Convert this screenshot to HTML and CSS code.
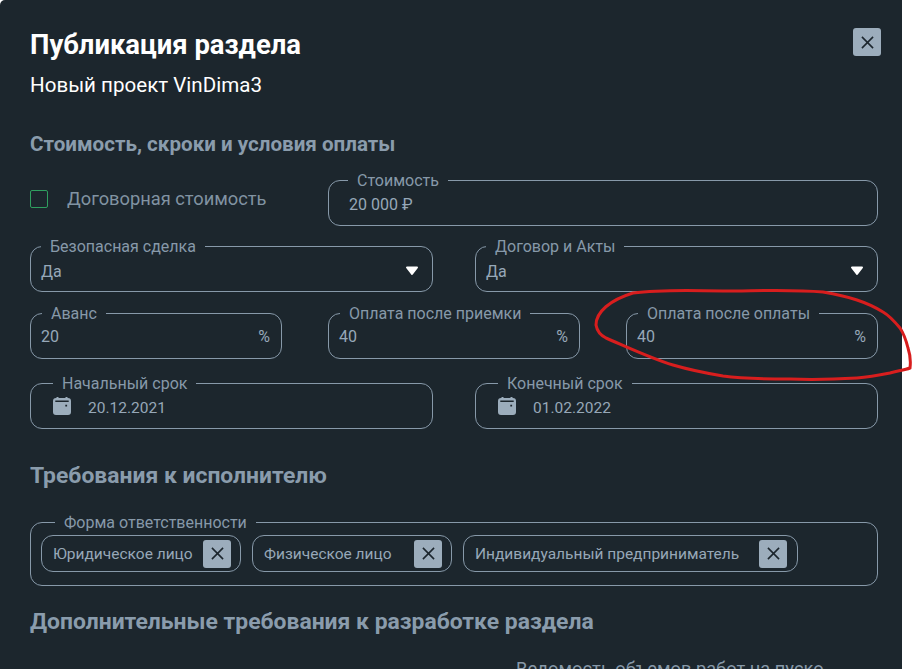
FILE: index.html
```html
<!DOCTYPE html>
<html lang="ru">
<head>
<meta charset="utf-8">
<title>Публикация раздела</title>
<link rel="stylesheet" href="styles.css">
</head>
<body>
<main class="modal">
  <header class="modal-head">
    <div>
      <h1 class="title">Публикация раздела</h1>
      <p class="subtitle">Новый проект VinDima3</p>
    </div>
    <button class="x-btn" type="button" aria-label="Закрыть"><svg viewBox="0 0 14 14"><path d="M1 1l12 12M13 1L1 13"/></svg></button>
  </header>

  <h2 class="section s-pay">Стоимость, скроки и условия оплаты</h2>
  <div class="row r-cost">
    <label class="check"><span class="box"></span><span class="check-text">Договорная стоимость</span></label>
    <fieldset class="field cost"><legend>Стоимость</legend><span class="val">20 000 ₽</span></fieldset>
  </div>
  <div class="row two g-a">
    <fieldset class="field"><legend>Безопасная сделка</legend><span class="val">Да</span><svg class="caret" viewBox="0 0 14 10"><path d="M2 1.5h10L7 8z"/></svg></fieldset>
    <fieldset class="field"><legend>Договор и Акты</legend><span class="val">Да</span><svg class="caret" viewBox="0 0 14 10"><path d="M2 1.5h10L7 8z"/></svg></fieldset>
  </div>
  <div class="row three">
    <fieldset class="field"><legend>Аванс</legend><span class="val">20</span><span class="unit">%</span></fieldset>
    <fieldset class="field"><legend>Оплата после приемки</legend><span class="val">40</span><span class="unit">%</span></fieldset>
    <fieldset class="field"><legend>Оплата после оплаты</legend><span class="val">40</span><span class="unit">%</span></fieldset>
  </div>
  <div class="row two g-c">
    <fieldset class="field date"><legend>Начальный срок</legend><svg class="cal" viewBox="0 0 18 18"><path d="M3.5 0h2v1h7V0h2v1h.5A3 3 0 0 1 18 4v11a3 3 0 0 1-3 3H3a3 3 0 0 1-3-3V4a3 3 0 0 1 3-3h.5z"/><path class="cal-cut" d="M2.3 4.2h13.4M12.3 8.6h1.8"/></svg><span class="val">20.12.2021</span></fieldset>
    <fieldset class="field date"><legend>Конечный срок</legend><svg class="cal" viewBox="0 0 18 18"><path d="M3.5 0h2v1h7V0h2v1h.5A3 3 0 0 1 18 4v11a3 3 0 0 1-3 3H3a3 3 0 0 1-3-3V4a3 3 0 0 1 3-3h.5z"/><path class="cal-cut" d="M2.3 4.2h13.4M12.3 8.6h1.8"/></svg><span class="val">01.02.2022</span></fieldset>
  </div>

  <h2 class="section big s-req">Требования к исполнителю</h2>
  <fieldset class="field chips"><legend>Форма ответственности</legend>
    <span class="chip c1">Юридическое лицо<button class="x-btn" type="button" aria-label="Удалить"><svg viewBox="0 0 14 14"><path d="M1 1l12 12M13 1L1 13"/></svg></button></span>
    <span class="chip c2">Физическое лицо<button class="x-btn" type="button" aria-label="Удалить"><svg viewBox="0 0 14 14"><path d="M1 1l12 12M13 1L1 13"/></svg></button></span>
    <span class="chip c3">Индивидуальный предприниматель<button class="x-btn" type="button" aria-label="Удалить"><svg viewBox="0 0 14 14"><path d="M1 1l12 12M13 1L1 13"/></svg></button></span>
  </fieldset>

  <h2 class="section big s-extra">Дополнительные требования к разработке раздела</h2>
  <p class="doc-line">Ведомость объемов работ на пуско</p>
</main>
<svg class="annotation" viewBox="0 0 914 669" aria-hidden="true"><path d="M723 291C690 290 655 290 633 293C610 300 596 312 596 325C597 331 600 335 606 338C625 346 650 358 673 365C690 370 705 373 723 376C745 379 770 379 790 379C815 380 840 379 857 378C870 377 880 375 890 373C897 371 905 370 910 368C911 360 910 354 908 348C906 340 904 334 900 328C895 322 890 316 883 312C875 307 866 303 857 300C845 296 835 294 823 292C790 289 755 291 723 291Z"/></svg>
</body>
</html>
```
FILE: styles.css
```css
* { box-sizing: border-box; }
html, body { margin: 0; height: 100%; background: #fff; overflow: hidden; }
body { position: relative; font-family: Roboto, "Liberation Sans", sans-serif; }
.modal {
  position: relative;
  width: 902px;
  height: 669px;
  padding: 0 21px 0 30px;
  background: #1c262d;
  border-top-left-radius: 5px;
  overflow: hidden;
  color: #97a8b8;
}
.modal-head { display: flex; justify-content: space-between; align-items: flex-start; padding-top: 28px; }
.title { margin: 0; font-size: 27.43px; line-height: 34px; font-weight: 700; color: #fff; }
.subtitle { margin: 11px 0 0; font-size: 20.57px; line-height: 24px; font-weight: 400; color: #fff; }
.x-btn {
  display: flex; align-items: center; justify-content: center;
  width: 28px; height: 28px; padding: 0; border: 0; border-radius: 3px;
  background: #9cadbc; flex: none;
}
.x-btn svg { width: 13px; height: 13px; fill: none; stroke: #1c262d; stroke-width: 1.7; }
.section { margin: 0; font-size: 20.6px; line-height: 24px; font-weight: 700; color: #8a9cac; }
.section.big { font-size: 22.9px; line-height: 26px; }
.s-pay { margin-top: 35px; }
.s-req { margin-top: 34px; }
.s-extra { margin-top: 23px; }
.row { display: grid; width: 848px; }
.two { grid-template-columns: 1fr 1fr; gap: 42px; }
.three { grid-template-columns: 252px 252px 252px; gap: 46px; margin-top: 12px; }
.g-a { margin-top: 11px; }
.g-c { margin-top: 15px; }
.r-cost { grid-template-columns: 298px 550px; margin-top: 15px; align-items: center; }
.check { display: flex; align-items: center; font-size: 18.29px; color: #8193a2; }
.box { width: 18px; height: 18px; border: 1px solid #2f9e5f; border-radius: 2px; margin-right: 19px; }
.field {
  position: relative; display: block; min-width: 0; margin: 0;
  height: 55px; padding: 0; border: 1px solid #8799a9; border-radius: 12px;
  color: #97a8b8;
}
.field legend { margin-left: 10px; padding: 1px 9px 0; font-size: 16px; line-height: 17px; color: #8799a9; }
.val { display: block; padding: 6px 0 0 10px; line-height: 20px; font-size: 16px; }
.g-a .val { padding-top: 7px; }
.three .val { padding-top: 5px; }
.three legend { margin-left: 11px; }
.cost legend { margin-left: 19px; }
.cost .val { padding-left: 20px; }
.caret { position: absolute; right: 13px; top: 11px; width: 14px; height: 10px; fill: #fff; stroke: #fff; stroke-width: 2; stroke-linejoin: round; }
.unit { position: absolute; right: 11px; top: 5px; font-size: 16px; line-height: 20px; }
.date legend { margin-left: 22px; }
.date .val { padding-left: 57px; font-size: 15.5px; }
.cal { position: absolute; left: 22px; top: 5px; width: 18px; height: 18px; fill: #9cadbc; }
.cal-cut { fill: none; stroke: #1c262d; stroke-width: 1.6; }
.chips { display: flex; gap: 11px; width: 848px; height: 73px; margin-top: 24px; padding: 4px 10px 0; }
.chips legend { margin-left: 14px; }
.chip {
  display: flex; align-items: center; justify-content: space-between;
  height: 37px; padding: 0 9px 0 11px; border: 1px solid #8799a9; border-radius: 12px;
  font-size: 15.5px; color: #97a8b8;
}
.c1, .c2 { width: 200px; }
.c3 { width: 335px; padding-right: 10px; }
.doc-line { position: absolute; left: 516px; top: 657px; margin: 0; font-size: 18.29px; line-height: 24px; color: #8799a9; }
.annotation { position: absolute; left: 0; top: 0; width: 914px; height: 669px; fill: none; stroke: #d81e1e; stroke-width: 3; pointer-events: none; }
```
